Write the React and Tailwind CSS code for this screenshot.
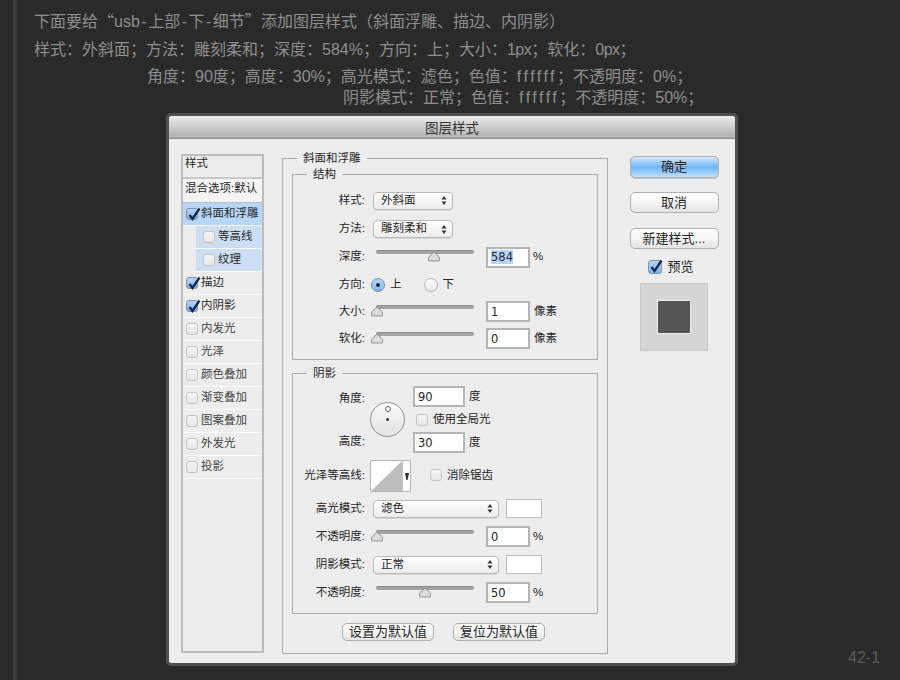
const Check = ({ checked, big }) => (
  <span className={`relative inline-block shrink-0 rounded-[3px] border ${big ? 'w-[14px] h-[14px]' : 'w-[12px] h-[12px]'} ${checked ? 'border-[#7f93ad] bg-linear-to-b from-[#b8d4f4] to-[#7fb0e6]' : 'border-[#c4c4c4] bg-linear-to-b from-[#f6f6f6] to-[#e6e6e6]'}`}>
    {checked && (
      <svg className="absolute left-0 -top-[3px] w-[15px] h-[16px]" viewBox="0 0 15 16">
        <path d="M2.5 9 L5.5 13 L12.5 2.5" fill="none" stroke="#14284a" strokeWidth="2.3" />
      </svg>
    )}
  </span>
);

const Updown = () => (
  <svg className="shrink-0 w-[6px] h-[9px]" viewBox="0 0 6 9">
    <path d="M3 0 L5.5 3.4 L.5 3.4 Z M3 9 L5.5 5.6 L.5 5.6 Z" fill="#333" />
  </svg>
);

const Select = ({ text, wide }) => (
  <div className={`flex items-center justify-between h-[18px] pl-[7px] pr-[5px] rounded-[4px] border border-[#b9b9b9] bg-linear-to-b from-white to-[#ececec] text-[11.5px] shadow-[0_1px_0_#d8d8d8] ${wide ? 'w-[126px]' : 'w-[80px]'}`}>
    <span>{text}</span>
    <Updown />
  </div>
);

const Slider = ({ thumb }) => (
  <div className="relative w-[98px] h-[16px] ml-[3px] shrink-0">
    <div className="absolute left-0 right-0 top-[1px] h-[4px] rounded-full bg-[#a3a3a3] border-t border-[#8a8a8a]" />
    <svg className={`absolute top-[2px] w-[12px] h-[11px] ${thumb}`} viewBox="0 0 13 11">
      <path d="M6.5 .7 L12.3 6 V10.3 H.7 V6 Z" fill="#dcdcdc" stroke="#8d8d8d" />
    </svg>
  </div>
);

const Input = ({ v, w = 'w-[44px]', sel }) => (
  <div className={`flex items-center h-[21px] pl-[3px] bg-white border-2 border-[#b5b5b5] text-[11.5px] font-['DejaVu_Sans',sans-serif] ${w}`}>
    <span className={`leading-[14px] ${sel ? 'bg-[#b5d5ff]' : ''}`}>{v}</span>
  </div>
);

const Label = ({ children }) => (
  <span className="w-[72px] shrink-0 text-right text-[11.5px]">{children}:</span>
);

const Row = ({ label, h, children }) => (
  <div className={`flex items-center ${h}`}>
    <Label>{label}</Label>
    <div className="flex items-center ml-[8px]">{children}</div>
  </div>
);

const Button = ({ children, blue, cls }) => (
  <div className={`flex items-center justify-center rounded-[5px] border border-[#b0b0b0] text-[13px] ${blue ? 'border-[#7f9cc0] bg-linear-to-b from-[#d5e8fb] via-[#6fb5f6] to-[#bfe0fb]' : 'bg-linear-to-b from-white via-[#f6f6f6] to-[#e4e4e4]'} ${cls}`}>
    {children}
  </div>
);

const Fieldset = ({ title, cls, legend, children }) => (
  <fieldset className={`border border-[#ababab] ${cls}`}>
    <legend className={`px-[6px] text-[11.5px] leading-[14px] ${legend}`}>{title}</legend>
    {children}
  </fieldset>
);

const sideRows = [
  ['斜面和浮雕', true, 'main'],
  ['等高线', false, 'sub'],
  ['纹理', false, 'sub'],
  ['描边', true],
  ['内阴影', true],
  ['内发光', false],
  ['光泽', false],
  ['颜色叠加', false],
  ['渐变叠加', false],
  ['图案叠加', false],
  ['外发光', false],
  ['投影', false],
];

const Sidebar = () => (
  <div className="flex flex-col w-[83px] h-[499px] border-2 border-[#bdbdbd] text-[11.5px] shrink-0">
    <div className="h-[23px] pl-[2px] leading-[14px] border-b-2 border-[#c8c8c8]">样式</div>
    <div className="h-[24px] pl-[2px] pt-[1px] leading-[16px] bg-[#f4f4f4] border-b border-[#bdbdbd] whitespace-nowrap">混合选项:默认</div>
    {sideRows.map(([t, c, kind]) => (
      <div key={t} className={`flex items-center h-[23px] border-b border-[#fafafa] shrink-0 ${kind === 'main' ? 'bg-[#b8d6fa] pl-[3px]' : kind === 'sub' ? 'ml-[13px] bg-[#cddef3] pl-[7px]' : 'pl-[3px]'}`}>
        <Check checked={c} />
        <span className={`ml-[3px] ${c || kind ? 'text-[#2a2a2a]' : 'text-[#444]'}`}>{t}</span>
      </div>
    ))}
  </div>
);

const Dial = () => (
  <div className="relative w-[35px] h-[35px] rounded-full border border-[#8f8f8f] bg-linear-to-b from-[#fafafa] to-[#e2e2e2]">
    <span className="absolute left-[14px] top-[3px] w-[6px] h-[6px] rounded-full bg-white border border-[#666]" />
    <span className="absolute left-[15px] top-[15px] w-[3px] h-[3px] rounded-full bg-[#333]" />
  </div>
);

const Curve = () => (
  <div className="flex w-[41px] h-[32px] rounded-[2px] border border-[#b5b5b5] bg-white overflow-hidden">
    <svg className="w-[31px] h-[30px]" viewBox="0 0 31 30">
      <path d="M0 30 L31 0 V30 Z" fill="#bdbdbd" />
    </svg>
    <div className="flex-1 flex items-center justify-center border-l border-[#c8c8c8]">
      <svg className="w-[4px] h-[7px]" viewBox="0 0 4 7"><path d="M0 0 H4 L2.6 7 H1.4 Z" fill="#333" /></svg>
    </div>
  </div>
);

const Swatch = () => <div className="ml-[7px] w-[36px] h-[19px] bg-white border border-[#bdbdbd]" />;

const F = () => <span className="tracking-[2.5px]">ffffff</span>;
const Q = ({ children }) => <span className="font-['Noto_Sans_CJK_SC',sans-serif]">{children}</span>;
const H = () => <span className="mx-[1.5px]">-</span>;
const N = ({ children }) => <span className="tracking-[-0.5px]">{children}</span>;

export default function App() {
  return (
    <div className="w-[900px] h-[680px] overflow-hidden bg-[#2a2a2a] flex font-['Liberation_Sans','Noto_Sans_CJK_SC',sans-serif]">
      <div className="w-[4px] ml-[13px] bg-[#3a3a3a] shrink-0" />
      <div className="flex-1 min-w-0 flex flex-col pt-[10px] text-[#8e8e8e]">
        <div className="ml-[17px] h-[20px] text-[16px] leading-[20px] whitespace-nowrap">下面要给<Q>“</Q>usb<H />上部<H />下<H />细节<Q>”</Q>添加图层样式&#xFF08;斜面浮雕、描边、内阴影&#xFF09;</div>
        <div className="ml-[17px] h-[20px] mt-[10px] text-[16px] leading-[20px] whitespace-nowrap">样式&#xFF1A;外斜面&#xFF1B;方法&#xFF1A;雕刻柔和&#xFF1B;深度&#xFF1A;584%&#xFF1B;方向&#xFF1A;上&#xFF1B;大小&#xFF1A;<N>1px</N>&#xFF1B;软化&#xFF1A;<N>0px</N>&#xFF1B;</div>
        <div className="ml-[130px] h-[20px] mt-[7px] text-[16px] leading-[20px] whitespace-nowrap">角度&#xFF1A;90度&#xFF1B;高度&#xFF1A;30%&#xFF1B;高光模式&#xFF1A;滤色&#xFF1B;色值&#xFF1A;<F />&#xFF1B;不透明度&#xFF1A;0%&#xFF1B;</div>
        <div className="ml-[326px] h-[20px] mt-[1px] text-[16px] leading-[20px] whitespace-nowrap">阴影模式&#xFF1A;正常&#xFF1B;色值&#xFF1A;<F />&#xFF1B;不透明度&#xFF1A;50%&#xFF1B;</div>

        <div className="flex mt-[5px] items-end">
          <div className="ml-[149px] w-[572px] h-[553px] shrink-0 rounded-[5px] border-[3px] border-[#4f4f4f] flex flex-col overflow-hidden text-[#262626]">
            <div className="h-[23px] pt-[4px] shrink-0 flex items-center justify-center bg-linear-to-b from-[#ececec] to-[#b0b0b0] border-b border-[#8a8a8a] text-[13.5px] text-[#333]">图层样式</div>
            <div className="flex-1 flex bg-[#ededed] pl-[12px] pt-[15px]">
              <Sidebar />
              <div className="ml-[18px] w-[326px] shrink-0">
                <Fieldset title="斜面和浮雕" legend="ml-[5px]" cls="h-[503px] -mt-[3px] px-[9px]">
                  <Fieldset title="结构" legend="ml-[14px]" cls="h-[193px] mt-[2px]">
                    <div className="pt-[5px]">
                      <Row label="样式" h="h-[29px]"><Select text="外斜面" /></Row>
                      <Row label="方法" h="h-[28px]"><Select text="雕刻柔和" /></Row>
                      <Row label="深度" h="h-[28px]">
                        <Slider thumb="left-[52px]" />
                        <span className="ml-[12px]"><Input v="584" sel /></span>
                        <span className="ml-[3px] text-[11.5px]">%</span>
                      </Row>
                      <Row label="方向" h="h-[27px]">
                        <span className="w-[14px] h-[14px] ml-[-2px] rounded-full border border-[#6f8fb5] bg-linear-to-b from-[#b9d5f5] to-[#84b5ea] flex items-center justify-center">
                          <span className="w-[4px] h-[4px] rounded-full bg-[#14284a]" />
                        </span>
                        <span className="ml-[5px] text-[11.5px]">上</span>
                        <span className="ml-[22px] w-[14px] h-[14px] rounded-full border border-[#b5b5b5] bg-linear-to-b from-white to-[#e8e8e8]" />
                        <span className="ml-[5px] text-[11.5px]">下</span>
                      </Row>
                      <Row label="大小" h="h-[27px]">
                        <Slider thumb="-left-[5px]" />
                        <span className="ml-[12px]"><Input v="1" /></span>
                        <span className="ml-[4px] text-[11.5px]">像素</span>
                      </Row>
                      <Row label="软化" h="h-[27px]">
                        <Slider thumb="-left-[5px]" />
                        <span className="ml-[12px]"><Input v="0" /></span>
                        <span className="ml-[4px] text-[11.5px]">像素</span>
                      </Row>
                    </div>
                  </Fieldset>
                  <Fieldset title="阴影" legend="ml-[14px]" cls="h-[248px] mt-[6px]">
                    <div className="flex h-[73px] mt-[6px]">
                      <div className="w-[72px] shrink-0 flex flex-col text-right text-[11.5px]">
                        <span className="mt-[4px]">角度:</span>
                        <span className="mt-[26px]">高度:</span>
                      </div>
                      <div className="ml-[5px] mt-[16px]"><Dial /></div>
                      <div className="ml-[8px] flex flex-col">
                        <div className="flex items-center">
                          <Input v="90" w="w-[52px]" />
                          <span className="ml-[4px] text-[11.5px]">度</span>
                        </div>
                        <div className="flex items-center h-[25px] ml-[3px]">
                          <Check />
                          <span className="ml-[5px] text-[11.5px]">使用全局光</span>
                        </div>
                        <div className="flex items-center">
                          <Input v="30" w="w-[52px]" />
                          <span className="ml-[4px] text-[11.5px]">度</span>
                        </div>
                      </div>
                    </div>
                    <div className="flex items-center h-[32px] mt-[1px]">
                      <Label>光泽等高线</Label>
                      <span className="ml-[5px]"><Curve /></span>
                      <span className="ml-[19px]"><Check /></span>
                      <span className="ml-[5px] text-[11.5px]">消除锯齿</span>
                    </div>
                    <div className="pt-[2px]">
                      <Row label="高光模式" h="h-[29px]"><Select text="滤色" wide /><Swatch /></Row>
                      <Row label="不透明度" h="h-[27px]">
                        <Slider thumb="-left-[5px]" />
                        <span className="ml-[12px]"><Input v="0" /></span>
                        <span className="ml-[3px] text-[11.5px]">%</span>
                      </Row>
                      <Row label="阴影模式" h="h-[29px]"><Select text="正常" wide /><Swatch /></Row>
                      <Row label="不透明度" h="h-[27px]">
                        <Slider thumb="left-[43px]" />
                        <span className="ml-[12px]"><Input v="50" /></span>
                        <span className="ml-[3px] text-[11.5px]">%</span>
                      </Row>
                    </div>
                  </Fieldset>
                  <div className="flex gap-[19px] mt-[9px] ml-[50px]">
                    <Button cls="w-[92px] h-[18px] text-[11.5px]">设置为默认值</Button>
                    <Button cls="w-[92px] h-[18px] text-[11.5px]">复位为默认值</Button>
                  </div>
                </Fieldset>
              </div>
              <div className="ml-[22px] w-[88px] flex flex-col items-center shrink-0 mt-[2px]">
                <Button blue cls="w-[89px] h-[22px] shadow-[0_1px_0_#c5c5c5]">确定</Button>
                <Button cls="w-[89px] h-[21px] mt-[14px]">取消</Button>
                <Button cls="w-[89px] h-[21px] mt-[15px]">新建样式...</Button>
                <div className="flex items-center mt-[8px] pr-[6px]">
                  <Check checked big />
                  <span className="ml-[5px] text-[13px]">预览</span>
                </div>
                <div className="mt-[6px] w-[68px] h-[68px] flex items-center justify-center bg-[#d6d6d6] border border-[#c8c8c8]">
                  <div className="w-[34px] h-[34px] bg-[#555] border border-[#eee]" />
                </div>
              </div>
            </div>
          </div>
          <div className="ml-[110px] mb-[-2px] text-[16px] leading-[20px] text-[#5e5a5a] whitespace-nowrap">42-1</div>
        </div>
      </div>
    </div>
  );
}
